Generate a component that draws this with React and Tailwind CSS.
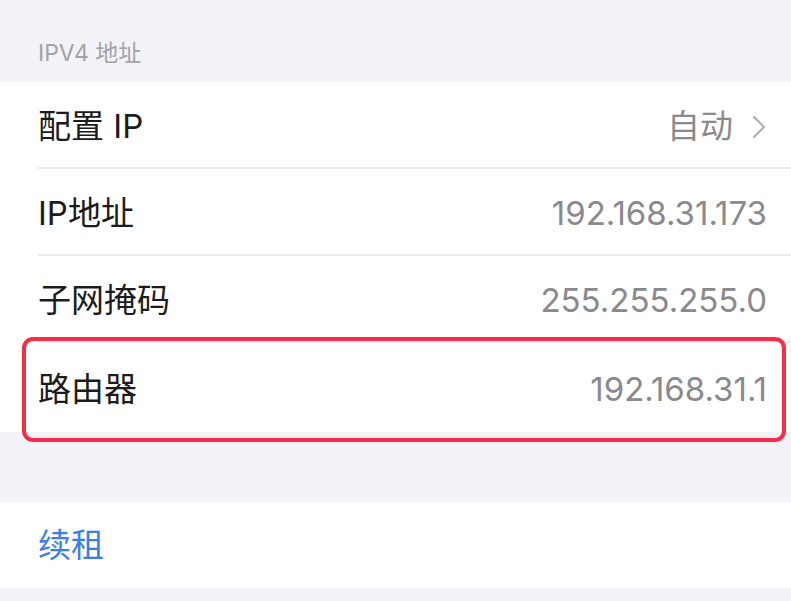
import React from "react";

const font = { fontFamily: '"Inter", "Noto Sans CJK SC", sans-serif' };

function Row({ label, value, chevron, last }) {
  return (
    <div className="pl-[38px] bg-white">
      <div
        className={
          "flex items-center justify-between pr-[24px] pt-[4px] " +
          (last ? "h-[89px]" : "h-[87px] border-b-2 border-[#ececf0]")
        }
      >
        <span className="text-[33px] text-[#1c1c1e]">{label}</span>
        <span className="flex items-center text-[33px] text-[#8a8a8e]">
          {value}
          {chevron && (
            <svg width="16" height="26" viewBox="0 0 16 26" className="ml-[18px]" fill="none">
              <path d="M3 3 L13 13 L3 23" stroke="#b4b4b9" strokeWidth="2.4" strokeLinecap="round" strokeLinejoin="round" />
            </svg>
          )}
        </span>
      </div>
    </div>
  );
}

export default function App() {
  return (
    <div className="w-[791px] h-[601px] bg-[#f2f2f7] overflow-hidden" style={font}>
      <div className="h-[82px] flex items-end pl-[38px] pb-[12px]">
        <span className="text-[23px] text-[#a2a2a7]">IPV4 地址</span>
      </div>
      <div className="relative">
        <Row label="配置 IP" value="自动" chevron />
        <Row label="IP地址" value="192.168.31.173" />
        <Row label="子网掩码" value="255.255.255.0" />
        <Row label="路由器" value="192.168.31.1" last />
        <div className="absolute left-[22px] right-[5px] top-[255px] h-[105px] border-[4px] border-[#fb2a48] rounded-[11px]" />
      </div>
      <div className="h-[70px]" />
      <div className="h-[86px] bg-white flex items-center pl-[38px] pt-[2px]">
        <span className="text-[33px] text-[#3a7ef0]">续租</span>
      </div>
    </div>
  );
}
